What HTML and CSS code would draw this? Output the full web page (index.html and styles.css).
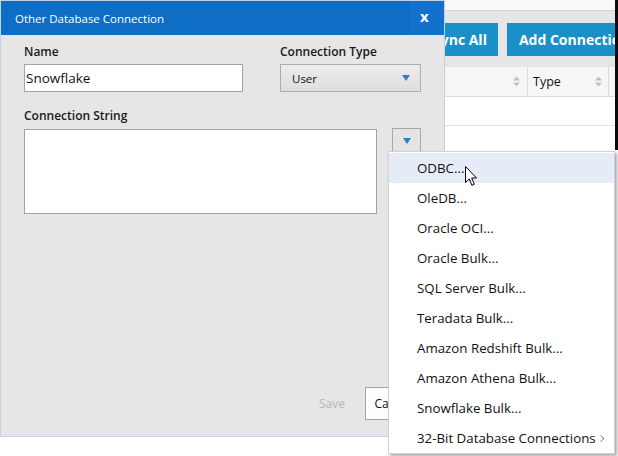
FILE: index.html
```html
<!DOCTYPE html>
<html>
<head>
<meta charset="utf-8">
<title>Other Database Connection</title>
<link rel="stylesheet" href="styles.css">
</head>
<body>
<div class="app">
  <div class="app-main">
    <div class="app-top"></div>
    <div class="toolbar">
      <button class="tb-btn">Sync All</button>
      <button class="tb-btn">Add Connection</button>
    </div>
    <div class="grid-head">
      <div class="gh-cell gh-first"><svg class="sort" width="7" height="11" viewBox="0 0 7 11"><polygon points="0,4.5 3.5,0.5 7,4.5"/><polygon points="0,6.5 3.5,10.5 7,6.5"/></svg></div>
      <div class="gh-cell gh-type"><span>Type</span><svg class="sort" width="7" height="11" viewBox="0 0 7 11"><polygon points="0,4.5 3.5,0.5 7,4.5"/><polygon points="0,6.5 3.5,10.5 7,6.5"/></svg></div>
      <div class="gh-cell gh-last"></div>
    </div>
    <div class="grid-row"></div>
  </div>
  <div class="app-edge"></div>
</div>

<div class="dialog">
  <div class="dlg-title">
    <span class="dlg-caption">Other Database Connection</span>
    <span class="dlg-close">x</span>
  </div>
  <div class="dlg-body">
    <div class="row1">
      <div class="field name-field">
        <label class="lbl">Name</label>
        <div class="input">Snowflake</div>
      </div>
      <div class="field type-field">
        <label class="lbl">Connection Type</label>
        <div class="select"><span>User</span><span class="tri"></span></div>
      </div>
    </div>
    <div class="field cs-field">
      <label class="lbl">Connection String</label>
      <div class="row2">
        <div class="textarea"></div>
        <div class="dd-btn"><span class="tri"></span></div>
      </div>
    </div>
    <div class="dlg-footer">
      <button class="btn-save">Save</button>
      <button class="btn-cancel">Cancel</button>
    </div>
  </div>
</div>

<div class="menu">
  <div class="mi hot">ODBC...</div>
  <div class="mi">OleDB...</div>
  <div class="mi">Oracle OCI...</div>
  <div class="mi">Oracle Bulk...</div>
  <div class="mi">SQL Server Bulk...</div>
  <div class="mi">Teradata Bulk...</div>
  <div class="mi">Amazon Redshift Bulk...</div>
  <div class="mi">Amazon Athena Bulk...</div>
  <div class="mi">Snowflake Bulk...</div>
  <div class="mi sub"><span>32-Bit Database Connections</span><svg class="chev" width="5" height="7" viewBox="0 0 5 7"><polyline points="0.5,0.5 4,3.5 0.5,6.5"/></svg></div>
</div>

<svg class="cursor" width="13" height="21" viewBox="0 0 13 21"><path d="M0.5,0.5 L0.5,16.5 L4.3,12.9 L6.9,19.3 L9.3,18.3 L6.7,12 L11.5,12 Z"/></svg>
</body>
</html>
```

FILE: styles.css
```css
* { box-sizing: border-box; }

body {
  margin: 0;
  width: 618px;
  height: 456px;
  overflow: hidden;
  position: relative;
  background: #ffffff;
  font-family: "Open Sans", "Noto Sans", sans-serif;
  color: #1a1a1a;
}

button {
  font: inherit;
  margin: 0;
}

/* background application */
.app {
  display: flex;
  height: 456px;
}

.app-main {
  width: 615px;
  display: flex;
  flex-direction: column;
  overflow: hidden;
}

.app-edge {
  width: 3px;
  height: 150px;
  background: #0c0c0c;
}

.app-top {
  height: 11px;
  background: #f9f9f9;
  border-bottom: 1px solid #d4d4d4;
}

.toolbar {
  height: 56px;
  background: #e6e6e6;
  display: flex;
  gap: 9px;
  padding: 12px 0 0 421px;
}

.tb-btn {
  flex-shrink: 0;
  height: 33px;
  border: none;
  background: #1a90c8;
  color: #ffffff;
  font-weight: 700;
  font-size: 14px;
  padding: 0 11px 0 12px;
  white-space: nowrap;
}

.grid-head {
  display: grid;
  grid-template-columns: 528px 81px 1fr;
  height: 30px;
  background: #f6f6f6;
  border-bottom: 1px solid #dcdcdc;
}

.gh-cell {
  display: flex;
  align-items: center;
  justify-content: space-between;
  border-right: 1px solid #dcdcdc;
  font-size: 12.5px;
  color: #111;
}

.gh-first {
  justify-content: flex-end;
  padding-right: 7px;
}

.gh-type {
  padding: 0 6px 0 5px;
}

.gh-last {
  border-right: none;
}

.sort polygon {
  fill: #bfbfbf;
}

.grid-row {
  height: 29px;
  background: #ffffff;
  border-bottom: 1px solid #e0e0e0;
}

/* dialog */
.dialog {
  position: absolute;
  left: 0;
  top: 0;
  width: 445px;
  height: 437px;
  border: 1px solid #c2d2e9;
  background: #e6e6e6;
  display: flex;
  flex-direction: column;
}

.dlg-title {
  height: 34px;
  background: #0e6ec6;
  display: flex;
  align-items: center;
  color: #ffffff;
}

.dlg-caption {
  flex: 1;
  font-size: 11.5px;
  padding-left: 14px;
  padding-top: 1px;
}

.dlg-close {
  width: 34px;
  height: 34px;
  background: #1272cb;
  font-weight: 700;
  font-size: 15px;
  line-height: 31px;
  padding-left: 10px;
}

.dlg-body {
  flex: 1;
  display: flex;
  flex-direction: column;
  padding: 9px 23px 16px 23px;
}

.row1 {
  display: flex;
  gap: 37px;
}

.field {
  display: flex;
  flex-direction: column;
}

.lbl {
  font-size: 12px;
  font-weight: 600;
  line-height: 16px;
  color: #1a1a1a;
}

.name-field {
  width: 219px;
}

.type-field {
  width: 141px;
}

.input {
  margin-top: 4px;
  height: 28px;
  background: #ffffff;
  border: 1px solid #a3a3a3;
  font-size: 13.5px;
  line-height: 26px;
  padding-left: 1px;
  color: #111;
}

.select {
  margin-top: 4px;
  height: 28px;
  border: 1px solid #adadad;
  background: linear-gradient(#ececec, #dedede);
  display: flex;
  align-items: center;
  justify-content: space-between;
  padding: 0 10px 0 11px;
  font-size: 11.5px;
  color: #111;
}

.tri {
  width: 0;
  height: 0;
  border-left: 4px solid transparent;
  border-right: 4px solid transparent;
  border-top: 6px solid #1d87c8;
}

.cs-field {
  margin-top: 16px;
}

.row2 {
  display: flex;
  align-items: flex-start;
  gap: 15px;
  margin-top: 5px;
}

.textarea {
  width: 353px;
  height: 85px;
  background: #ffffff;
  border: 1px solid #a3a3a3;
}

.dd-btn {
  margin-top: -1px;
  width: 29px;
  height: 25px;
  border: 1px solid #a8a8a8;
  background: #e4e4e4;
  display: flex;
  align-items: center;
  justify-content: center;
}

.dlg-footer {
  margin-top: auto;
  display: flex;
  justify-content: flex-end;
  gap: 5px;
}

.btn-save,
.btn-cancel {
  width: 56px;
  height: 33px;
  font-size: 12px;
  padding: 0;
}

.btn-save {
  background: transparent;
  border: 1px solid transparent;
  color: #b5b5b5;
}

.btn-cancel {
  background: #fdfdfd;
  border: 1px solid #a3a3a3;
  color: #111;
}

/* dropdown menu */
.menu {
  position: absolute;
  left: 388px;
  top: 151px;
  width: 227px;
  border: 1px solid #d3d3d3;
  padding-top: 1px;
  background: #ffffff;
  box-shadow: 2px 2px 3px rgba(0, 0, 0, 0.35);
}

.mi {
  height: 30px;
  display: flex;
  align-items: center;
  padding: 0 9px 0 28px;
  font-size: 13.3px;
  color: #111;
  white-space: nowrap;
}

.mi.hot {
  background: #e6ebf8;
}

.chev {
  margin-left: auto;
}

.chev polyline {
  fill: none;
  stroke: #707070;
  stroke-width: 1;
}

.cursor {
  position: absolute;
  left: 465px;
  top: 166px;
}

.cursor path {
  fill: #ffffff;
  stroke: #000000;
  stroke-width: 1;
  stroke-linejoin: miter;
}
```
